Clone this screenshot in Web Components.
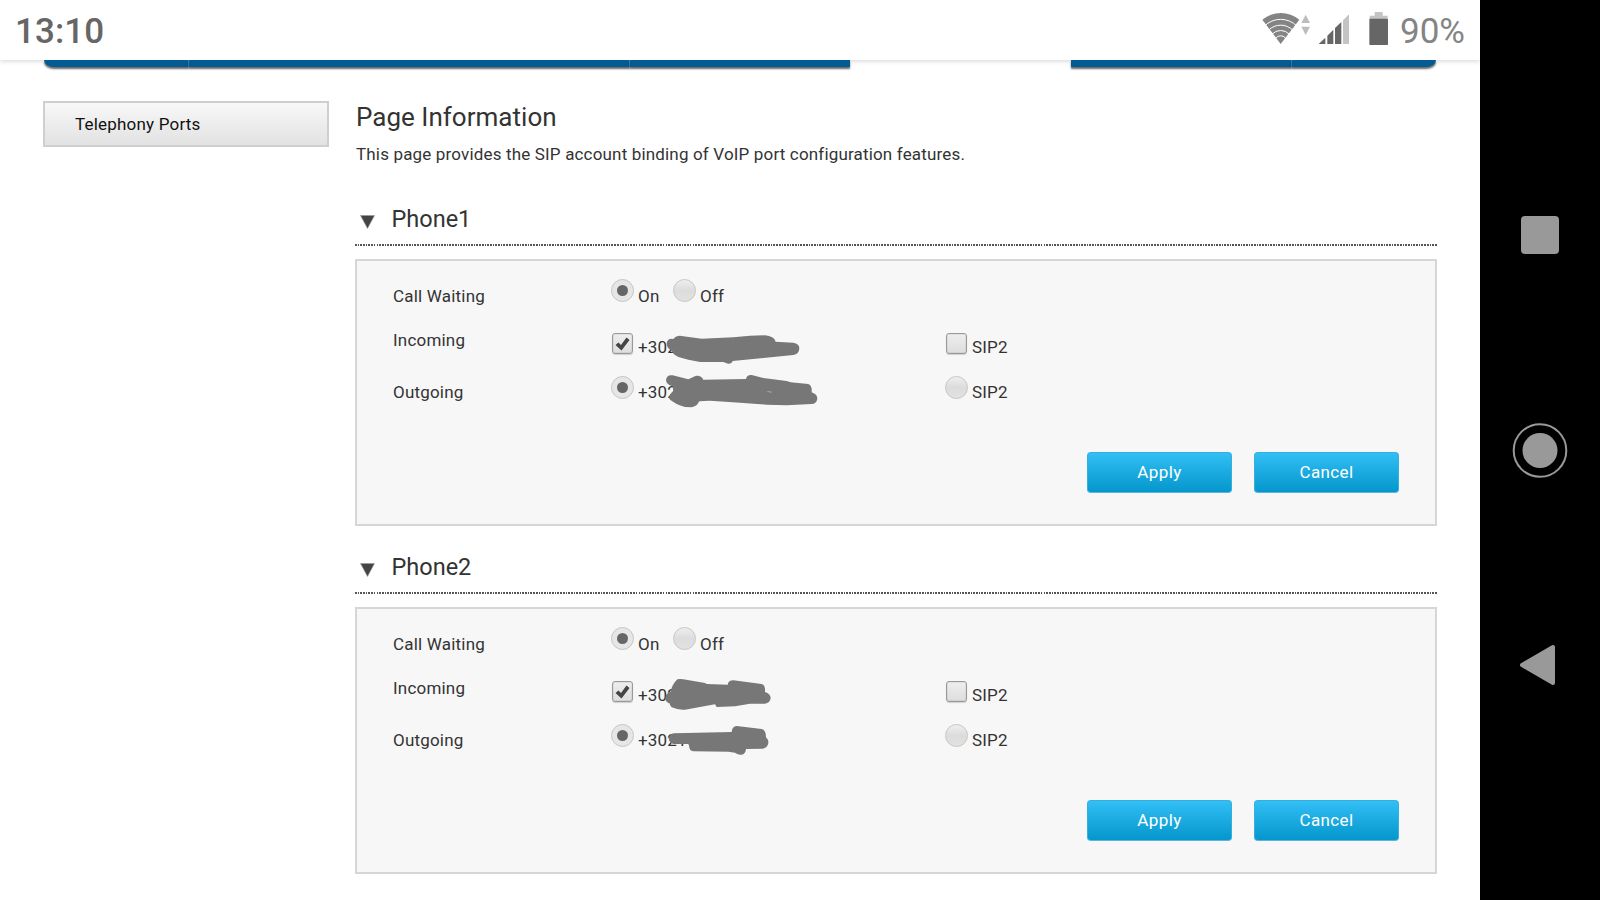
<!DOCTYPE html>
<html lang="en">
<head>
<meta charset="utf-8">
<title>Telephony Ports</title>
<style>
	body {
		margin: 0;
		background: #fff;
		color: #333;
		font: 17px/20px Roboto, sans-serif;
	}
</style>
</head>
<body>
<phone-screen>
	<status-bar slot="status" time="13:10" battery="90%"></status-bar>
	<nav-strip slot="nav"></nav-strip>
	<side-item slot="side">Telephony Ports</side-item>
	<page-intro heading="Page Information">This page provides the SIP account binding of VoIP port configuration features.</page-intro>
	<port-section heading="Phone1">
		<port-row label="Call Waiting" kind="toggle">
			<port-choice type="radio" checked>On</port-choice>
			<port-choice type="radio">Off</port-choice>
		</port-row>
		<port-row label="Incoming" kind="incoming">
			<port-choice type="checkbox" checked mark="a">+302</port-choice>
			<port-choice type="checkbox">SIP2</port-choice>
		</port-row>
		<port-row label="Outgoing" kind="outgoing">
			<port-choice type="radio" checked mark="b">+302</port-choice>
			<port-choice type="radio">SIP2</port-choice>
		</port-row>
		<action-button slot="actions">Apply</action-button>
		<action-button slot="actions">Cancel</action-button>
	</port-section>
	<port-section heading="Phone2">
		<port-row label="Call Waiting" kind="toggle">
			<port-choice type="radio" checked>On</port-choice>
			<port-choice type="radio">Off</port-choice>
		</port-row>
		<port-row label="Incoming" kind="incoming">
			<port-choice type="checkbox" checked mark="c">+302</port-choice>
			<port-choice type="checkbox">SIP2</port-choice>
		</port-row>
		<port-row label="Outgoing" kind="outgoing">
			<port-choice type="radio" checked mark="d">+3021</port-choice>
			<port-choice type="radio">SIP2</port-choice>
		</port-row>
		<action-button slot="actions">Apply</action-button>
		<action-button slot="actions">Cancel</action-button>
	</port-section>
	<system-keys slot="keys"></system-keys>
</phone-screen>

<script>
(function(){
	'use strict';

	// clone the markup into an open shadow root
	function render(host, html){
		const tmpl = document.createElement('template');
		tmpl.innerHTML = html;
		host.attachShadow({mode: 'open'}).appendChild(tmpl.content.cloneNode(true));
	}

	window.customElements.define('phone-screen', class extends HTMLElement {
		constructor(){
			super();
			render(this, `
				<style>
					:host {
						display: grid;
						grid-template-columns: 1480px 120px;
						height: 900px;
						overflow: hidden;
					}
					.page {
						min-width: 0;
						height: 900px;
						overflow: hidden;
					}
					.body {
						display: grid;
						grid-template-columns: 286px 1082px;
						column-gap: 26px;
						padding: 28px 43px 0;
					}
				</style>
				<div class="page">
					<slot name="status"></slot>
					<slot name="nav"></slot>
					<div class="body">
						<aside><slot name="side"></slot></aside>
						<main><slot></slot></main>
					</div>
				</div>
				<slot name="keys"></slot>
			`);
		}
	});

	window.customElements.define('status-bar', class extends HTMLElement {
		constructor(){
			super();
			render(this, `
				<style>
					:host {
						display: flex;
						align-items: center;
						justify-content: space-between;
						box-sizing: border-box;
						height: 60px;
						padding: 3px 15px 0 15px;
						background: #fff;
						box-shadow: 0 1px 5px rgba(0,0,0,0.18);
						position: relative;
						z-index: 1;
						line-height: 40px;
					}
					.time {
						color: #666;
						font-size: 35px;
						font-weight: 500;
						letter-spacing: 0.1px;
					}
					.tray {
						display: flex;
						align-items: center;
					}
					.level {
						color: #848484;
						font-size: 35px;
						margin-left: 11px;
					}
					svg {
						display: block;
						margin-top: -5px;
					}
				</style>
				<span class="time"></span>
				<div class="tray">
					<svg width="127" height="34" viewBox="245 39 381 102">
						<path fill="#848484" d="M246 62A86 86 0 0 1 357 62L301 135Z"/>
						<g fill="none" stroke="#fff" stroke-width="3">
							<circle cx="301" cy="130" r="69"/>
							<circle cx="301" cy="130" r="51.5"/>
							<circle cx="301" cy="130" r="35.5"/>
							<circle cx="301" cy="130" r="19.5"/>
						</g>
						<path fill="#bdbdbd" d="M376 47L389 72H363ZM363 83H389L376 108Z"/>
						<path fill="#666" d="M415 135L435 116V135ZM441 135V110L459 92V135ZM464 135V87L483 69V135Z"/>
						<path fill="#c4c4c4" d="M488 135V64L506 46V135Z"/>
						<path fill="#c4c4c4" d="M583 39H607V50H622V60H568V50H583Z"/>
						<rect fill="#666" x="567" y="59" width="56" height="79" rx="3"/>
					</svg>
					<span class="level"></span>
				</div>
			`);
		}

		connectedCallback(){
			this.shadowRoot.querySelector('.time').textContent = this.getAttribute('time');
			this.shadowRoot.querySelector('.level').textContent = this.getAttribute('battery');
		}
	});

	// bottom edge of the tab bar, the white gap is the active tab
	window.customElements.define('nav-strip', class extends HTMLElement {
		constructor(){
			super();
			render(this, `
				<style>
					:host {
						display: grid;
						grid-template-columns: 145px 441px 220px 221px 221px 144px;
						height: 13px;
						padding: 0 44px;
						overflow: hidden;
						position: relative;
						z-index: 2;
					}
					i {
						box-sizing: border-box;
						height: 7px;
						background: #045a92;
						border-right: 1px solid #3f86b0;
						box-shadow: 0 2px 2px rgba(0,0,0,0.6);
					}
					i:first-of-type { border-bottom-left-radius: 10px 7px; }
					i:last-of-type { border-bottom-right-radius: 10px 7px; }
					i:nth-of-type(3), i:last-of-type { border-right: none; }
				</style>
				<i></i><i></i><i></i><b></b><i></i><i></i>
			`);
		}
	});

	window.customElements.define('side-item', class extends HTMLElement {
		constructor(){
			super();
			render(this, `
				<style>
					:host {
						display: block;
						box-sizing: border-box;
						height: 46px;
						padding: 11px 0 0 30px;
						border: 2px solid #cfcfcf;
						background: linear-gradient(#f8f8f8, #e2e2e2);
						color: #111;
						letter-spacing: 0.2px;
					}
				</style>
				<slot></slot>
			`);
		}
	});

	window.customElements.define('page-intro', class extends HTMLElement {
		constructor(){
			super();
			render(this, `
				<style>
					:host {
						display: block;
						box-sizing: border-box;
						height: 97px;
						padding: 1px 0 0 1px;
					}
					h1 {
						margin: 0 0 12px;
						font: 400 26px/30px Roboto, sans-serif;
						letter-spacing: 0.02px;
					}
					p {
						margin: 0;
						letter-spacing: 0.165px;
					}
				</style>
				<h1></h1>
				<p><slot></slot></p>
			`);
		}

		connectedCallback(){
			this.shadowRoot.querySelector('h1').textContent = this.getAttribute('heading');
		}
	});

	window.customElements.define('port-section', class extends HTMLElement {
		constructor(){
			super();
			render(this, `
				<style>
					:host {
						display: block;
						height: 348px;
					}
					header {
						display: flex;
						align-items: center;
						box-sizing: border-box;
						height: 46px;
						padding: 0 0 4px 5px;
					}
					header svg { margin: 6px 16.5px 0 0; }
					h2 {
						margin: 0;
						font: 400 23.5px/28px Roboto, sans-serif;
					}
					.rule {
						height: 2px;
						background: repeating-linear-gradient(90deg, #555 0 1.6px, #fff 1.6px 2.7px);
					}
					.panel {
						box-sizing: border-box;
						height: 267px;
						margin-top: 13px;
						padding: 18px 36px 0;
						border: 2px solid #d6d6d6;
						background: #f7f7f7;
					}
					.rows { height: 173px; }
					.actions {
						display: flex;
						justify-content: flex-end;
						gap: 22px;
					}
				</style>
				<header>
					<svg width="15" height="14" viewBox="0 0 15 14"><path fill="#444" stroke="#999" stroke-width=".6" d="M.5 .5H14.5L7.5 13.5Z"/></svg>
					<h2></h2>
				</header>
				<div class="rule"></div>
				<div class="panel">
					<div class="rows"><slot></slot></div>
					<div class="actions"><slot name="actions"></slot></div>
				</div>
			`);
		}

		connectedCallback(){
			this.shadowRoot.querySelector('h2').textContent = this.getAttribute('heading');
		}
	});

	window.customElements.define('port-row', class extends HTMLElement {
		constructor(){
			super();
			render(this, `
				<style>
					:host {
						display: grid;
						grid-template-columns: 218px 334px auto;
						align-items: start;
						height: 43px;
						--drop: 6px;
					}
					:host([kind="toggle"]) {
						grid-template-columns: 218px 62px auto;
						height: 54px;
						--drop: 7px;
					}
					:host([kind="incoming"]) { --drop: 4px; }
					label {
						padding-top: var(--drop);
						letter-spacing: 0.2px;
					}
					:host([kind="incoming"]) label {
						margin-top: -3px;
						padding: 0;
					}
				</style>
				<label></label>
				<slot></slot>
			`);
		}

		connectedCallback(){
			this.shadowRoot.querySelector('label').textContent = this.getAttribute('label');
		}
	});

	// scribbles that hide the subscriber numbers, three units per pixel
	const marks = {
		a: ['33 204 660 90', 'M200 235Q203 219 220 222Q232 208 250 214L305 221L400 217L450 212L495 211Q522 213 527 230L580 233Q598 236 598 250Q597 268 580 270L490 279L398 288Q395 297 384 296L370 291L300 291L265 284L235 276Q218 268 216 258Q200 250 200 235Z'],
		b: ['33 333 660 90', 'M198 345Q200 328 218 331L265 343L288 332Q305 331 310 344L438 342Q440 329 455 330L490 339L560 348L572 352L625 357Q637 362 635 382Q652 388 652 401Q650 416 635 417L560 421L500 419L420 413L330 407L298 409Q290 425 275 427L255 426Q225 418 208 402Q206 390 220 378L218 364Q198 358 198 345ZM499 379L508 382L520 381L508 380Z'],
		c: ['33 213 660 90', 'M196 265Q196 250 212 245Q215 225 232 208Q240 206 250 208L315 219L320 222L383 224Q385 211 400 211L485 222Q497 226 495 246Q512 251 512 265Q510 279 495 281L450 281L405 289L350 291L345 283L312 289L255 299Q235 301 215 292Q208 284 210 281Q197 278 196 265Z'],
		d: ['33 342 660 90', 'M206 385Q208 371 222 370L395 366Q396 350 410 348L485 357Q498 361 498 382Q506 389 505 400Q502 414 488 416L438 417Q437 433 424 434Q414 435 405 428L385 425L280 424Q268 422 267 407L265 402L220 402Q207 398 206 385Z']
	};

	window.customElements.define('port-choice', class extends HTMLElement {
		constructor(){
			super();
			render(this, `
				<style>
					:host {
						display: flex;
						align-items: flex-start;
						position: relative;
					}
					.box {
						display: flex;
						align-items: center;
						justify-content: center;
						box-sizing: border-box;
						width: 23px;
						height: 23px;
						margin-right: 4px;
						border: 1px solid #c6c6c6;
						border-radius: 50%;
						background: linear-gradient(#eee, #dcdcdc 50%, #e2e2e2);
					}
					:host([type="radio"][checked]) .box { background: #e6e6e6; }
					:host([type="checkbox"]) .box {
						width: 21px;
						height: 21px;
						margin: 0 5px 0 1px;
						border: 1px solid #999;
						border-radius: 3px;
						background: linear-gradient(#eee, #ddd);
						box-shadow: 0 1px 1px rgba(0,0,0,0.16), inset 0 0 0 1px rgba(0,0,0,0.05);
					}
					.dot {
						display: none;
						width: 11px;
						height: 11px;
						border-radius: 50%;
						background: #666;
					}
					.tick { display: none; }
					:host([type="radio"][checked]) .dot,
					:host([type="checkbox"][checked]) .tick { display: block; }
					.text {
						margin-top: var(--drop);
						letter-spacing: 0.2px;
					}
					.mark {
						position: absolute;
						left: 0;
						top: 0;
						overflow: visible;
					}
				</style>
				<span class="box">
					<span class="dot"></span>
					<svg class="tick" width="15" height="14" viewBox="0 0 15 14"><path fill="#444" d="M.5 8L3.5 5.5L6 8L11.5 .5L14.5 3L6.5 13.5Z"/></svg>
				</span>
				<span class="text"><slot></slot></span>
			`);
		}

		connectedCallback(){
			const mark = marks[this.getAttribute('mark')];
			if(!mark){
				return;
			}
			const tmpl = document.createElement('template');
			tmpl.innerHTML = `<svg class="mark" width="220" height="30" viewBox="${mark[0]}"><path fill="#777" d="${mark[1]}" fill-rule="evenodd"/></svg>`;
			this.shadowRoot.appendChild(tmpl.content.cloneNode(true));
		}
	});

	window.customElements.define('action-button', class extends HTMLElement {
		constructor(){
			super();
			render(this, `
				<style>
					:host {
						display: block;
						box-sizing: border-box;
						width: 145px;
						height: 41px;
						border: 1px solid #35b0dd;
						border-bottom-color: #5db4d6;
						border-radius: 4px;
						background: linear-gradient(#32bff5, #0496cc);
						color: #fff;
						line-height: 39px;
						text-align: center;
						letter-spacing: 0.4px;
					}
				</style>
				<slot></slot>
			`);
		}
	});

	window.customElements.define('system-keys', class extends HTMLElement {
		constructor(){
			super();
			render(this, `
				<style>
					:host {
						display: flex;
						flex-direction: column;
						align-items: center;
						justify-content: center;
						gap: 160px;
						background: #000;
					}
					svg { display: block; }
				</style>
				<svg width="56" height="55" viewBox="0 0 56 55"><rect x="9" y="8" width="38" height="38" rx="4" fill="#999"/></svg>
				<svg width="56" height="55" viewBox="0 0 56 55"><circle cx="28" cy="27.5" r="26.3" fill="none" stroke="#999" stroke-width="2"/><circle cx="28" cy="27.5" r="17.5" fill="#999"/></svg>
				<svg width="56" height="55" viewBox="0 0 56 55"><path fill="#999" stroke="#999" stroke-width="4" stroke-linejoin="round" d="M41 9V45L10 27Z"/></svg>
			`);
		}
	});

}());
</script>
</body>
</html>
